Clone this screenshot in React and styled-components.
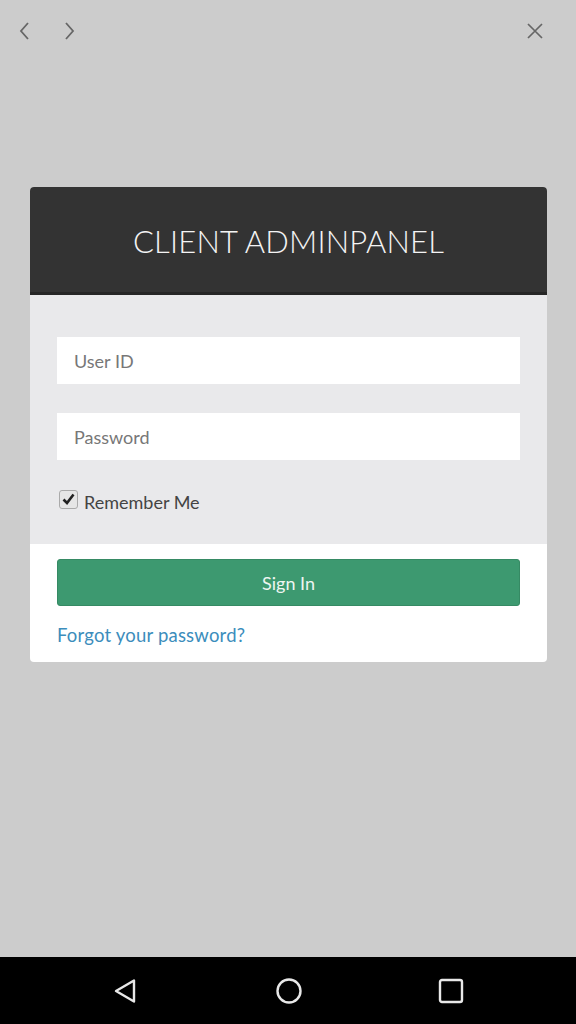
import React from 'react';
import styled, { createGlobalStyle } from 'styled-components';

const Global = createGlobalStyle`
  html, body {
    margin: 0;
    padding: 0;
    background: #cccccc;
  }
  body {
    font-family: Lato, "Open Sans", "Liberation Sans", sans-serif;
  }
`;

const Screen = styled.div`
  display: flex;
  flex-direction: column;
  height: 1024px;
  width: 576px;
  background: #cccccc;
`;

const TopBar = styled.div`
  align-items: center;
  display: flex;
  height: 62px;
  padding: 0 30px 0 14px;
  box-sizing: border-box;
`;

const NavIcon = styled.button`
  align-items: center;
  background: none;
  border: 0;
  display: flex;
  height: 40px;
  justify-content: center;
  margin-right: ${({ gap }) => gap || 0}px;
  padding: 0;
  width: 22px;
`;

const Spacer = styled.div`
  flex: 1;
`;

const Stage = styled.div`
  flex: 1;
  padding: 125px 29px 0 30px;
`;

const Card = styled.div`
  background: #fff;
  border-radius: 4px;
  overflow: hidden;
`;

const Header = styled.div`
  align-items: center;
  background: #333333;
  border-bottom: 3px solid #262626;
  display: flex;
  height: 105px;
  justify-content: center;
`;

const Title = styled.h1`
  color: #f4f4f4;
  font-size: 31px;
  font-weight: 300;
  letter-spacing: 0.2px;
  margin: 3px 0 0;
`;

const Body = styled.div`
  background: #e9e9eb;
  display: flex;
  flex-direction: column;
  gap: 29px;
  padding: 42px 27px 31px;
`;

const Input = styled.input`
  background: #fff;
  border: 0;
  box-sizing: border-box;
  color: #555;
  font-family: inherit;
  font-size: 18px;
  height: 47px;
  outline: none;
  padding: 0 17px;
  width: 100%;

  &::placeholder {
    color: #777;
  }
`;

const Remember = styled.label`
  align-items: center;
  color: #444;
  display: flex;
  font-size: 18px;
  gap: 6px;
  margin-top: 2px;
`;

const Box = styled.span`
  align-items: center;
  background: #e6e6e6;
  border: 1px solid #aaa;
  border-radius: 3px;
  box-sizing: border-box;
  display: flex;
  height: 19px;
  justify-content: center;
  margin: -6px 0 0 2px;
  width: 19px;
`;

const Footer = styled.div`
  display: flex;
  flex-direction: column;
  gap: 18px;
  padding: 15px 27px 16px;
`;

const SignIn = styled.button`
  background: #3d9970;
  border: 1px solid #368a64;
  border-radius: 3px;
  color: #eef5f1;
  font-family: inherit;
  font-size: 18px;
  height: 47px;
  width: 100%;
`;

const Forgot = styled.a`
  color: #3c8dbc;
  font-size: 18.5px;
  letter-spacing: 0.2px;
  text-decoration: none;
`;

const SystemBar = styled.div`
  align-items: center;
  background: #000;
  display: flex;
  height: 67px;
  justify-content: space-between;
  padding: 0 110px 0 111px;
`;

const SysIcon = styled.div`
  align-items: center;
  display: flex;
  height: 30px;
  justify-content: center;
  width: 30px;
`;

function Chevron({ flip }) {
  return (
    <svg width="12" height="20" viewBox="0 0 12 20">
      <path
        d={flip ? 'M3 2 L10 10 L3 18' : 'M9 2 L2 10 L9 18'}
        fill="none"
        stroke="#666"
        strokeWidth="1.8"
      />
    </svg>
  );
}

export default function App() {
  return (
    <Screen>
      <Global />
      <TopBar>
        <NavIcon gap={22}>
          <Chevron />
        </NavIcon>
        <NavIcon>
          <Chevron flip />
        </NavIcon>
        <Spacer />
        <NavIcon>
          <svg width="18" height="18" viewBox="0 0 18 18">
            <path d="M2 2 L16 16 M16 2 L2 16" stroke="#666" strokeWidth="1.7" />
          </svg>
        </NavIcon>
      </TopBar>
      <Stage>
        <Card>
          <Header>
            <Title>CLIENT ADMINPANEL</Title>
          </Header>
          <Body>
            <Input placeholder="User ID" />
            <Input placeholder="Password" type="password" />
            <Remember>
              <Box>
                <svg width="13" height="12" viewBox="0 0 13 12">
                  <path d="M1.5 6.5 L5 10 L11.5 1.5" fill="none" stroke="#222" strokeWidth="2.6" />
                </svg>
              </Box>
              Remember Me
            </Remember>
          </Body>
          <Footer>
            <SignIn>Sign In</SignIn>
            <Forgot href="#">Forgot your password?</Forgot>
          </Footer>
        </Card>
      </Stage>
      <SystemBar>
        <SysIcon>
          <svg width="28" height="28" viewBox="0 0 28 28">
            <path d="M22 3.5 L22 24.5 L4 14 Z" fill="none" stroke="#e8e8e8" strokeWidth="2.4" strokeLinejoin="round" />
          </svg>
        </SysIcon>
        <SysIcon>
          <svg width="28" height="28" viewBox="0 0 28 28">
            <circle cx="14" cy="14" r="11.5" fill="none" stroke="#e8e8e8" strokeWidth="2.4" />
          </svg>
        </SysIcon>
        <SysIcon>
          <svg width="28" height="28" viewBox="0 0 28 28">
            <rect x="3" y="3" width="22" height="22" rx="2" fill="none" stroke="#e8e8e8" strokeWidth="2.4" />
          </svg>
        </SysIcon>
      </SystemBar>
    </Screen>
  );
}
